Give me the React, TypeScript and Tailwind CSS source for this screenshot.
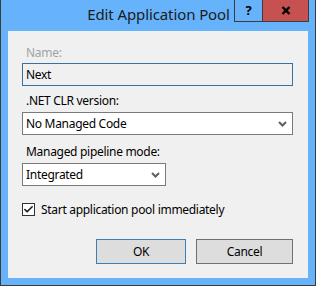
import { Check } from 'lucide-react'

function Chevron() {
  return (
    <svg width="9" height="6" viewBox="0 0 9 6" className="shrink-0">
      <path d="M1 1 L4.5 4.5 L8 1" stroke="#5f5f5f" strokeWidth="2" fill="none" />
    </svg>
  )
}

export default function App() {
  const font = { fontFamily: '"Noto Sans", "Open Sans", sans-serif' }

  return (
    <div className="w-[316px] h-[286px] bg-[#66b3fb] border border-t-0 border-[#3b3b3b] flex flex-col text-[12px] tracking-[-0.3px] text-black" style={font}>
      {/* Title bar */}
      <div className="h-[31px] flex items-start relative">
        <div className="flex-1 h-[31px] flex items-center justify-center pl-[1px] pb-[2px] text-[15px] text-[#1b1b1b] tracking-[-0.1px]">
          Edit Application Pool
        </div>
        <div className="absolute right-[6px] top-0 flex">
          <div className="w-[29px] h-[22px] border-x border-b border-[#3c3c3c] flex items-center justify-center font-bold text-[13px] text-black">?</div>
          <div className="w-[46px] h-[22px] border-r border-b border-[#3c3c3c] bg-[#c75050] flex items-center justify-center">
            <svg width="10" height="9" viewBox="0 0 10 9">
              <path d="M1.5 1 L8.5 8 M8.5 1 L1.5 8" stroke="#000" strokeWidth="2.4" />
            </svg>
          </div>
        </div>
      </div>

      {/* Client area */}
      <div className="mx-[7px] h-[247px] bg-[#f0f0f0] flex flex-col pl-[14px]">
        <div className="mt-[14px] h-[16px] leading-[16px] pl-[4px] text-[#a3a3a3]">Name:</div>
        <div className="mt-[2px] w-[271px] h-[23px] border border-[#3c6f9c] flex items-center pl-[3px]">Next</div>

        <div className="mt-[7px] h-[16px] leading-[16px] pl-[4px]">.NET CLR version:</div>
        <div className="mt-[3px] w-[271px] h-[23px] border border-[#7a7a7a] bg-white flex items-center justify-between pl-[3px] pr-[5px]">
          <span>No Managed Code</span>
          <Chevron />
        </div>

        <div className="mt-[9px] h-[16px] leading-[16px] pl-[4px]">Managed pipeline mode:</div>
        <div className="mt-[3px] w-[144px] h-[23px] border border-[#7a7a7a] bg-white flex items-center justify-between pl-[3px] pr-[5px]">
          <span>Integrated</span>
          <Chevron />
        </div>

        <div className="mt-[17px] flex items-center gap-[6px]">
          <div className="w-[13px] h-[13px] border border-[#333] bg-white flex items-center justify-center">
            <Check size={11} strokeWidth={3.5} color="#1a1a1a" />
          </div>
          <span className="leading-[13px]">Start application pool immediately</span>
        </div>

        <div className="mt-[23px] flex gap-[10px] pl-[74px]">
          <button className="w-[90px] h-[25px] border border-[#3c7fb1] bg-[#dddddd] flex items-center justify-center">OK</button>
          <button className="w-[97px] h-[25px] border border-[#707070] bg-[#dddddd] flex items-center justify-center">Cancel</button>
        </div>
      </div>
    </div>
  )
}
